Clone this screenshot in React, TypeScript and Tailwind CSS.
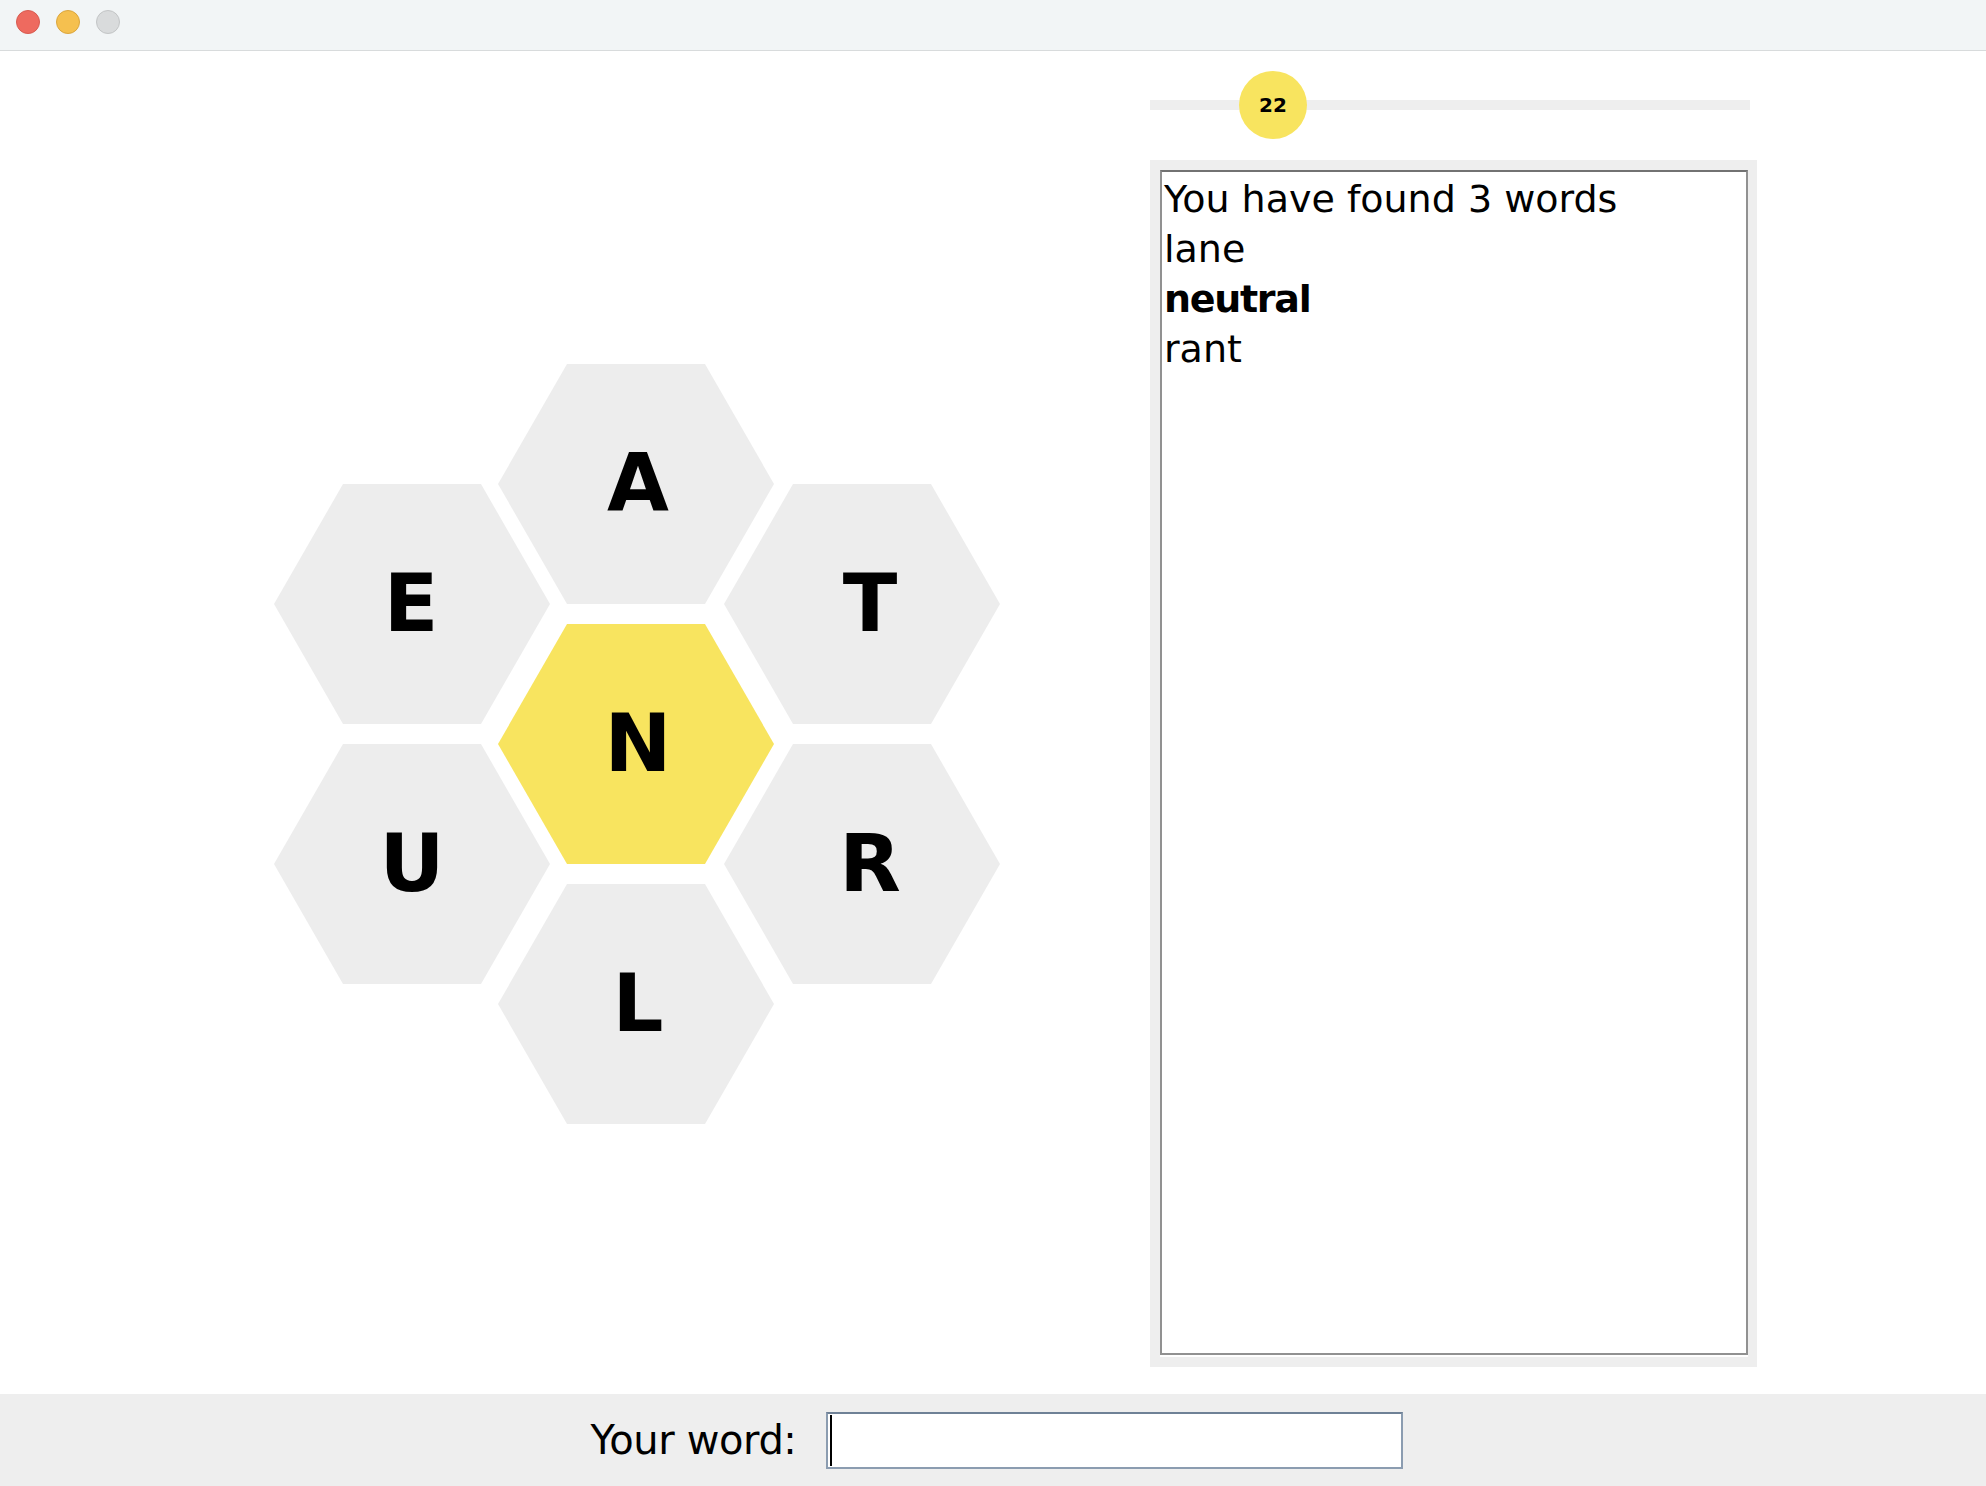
import React from "react";

const hexClip = "[clip-path:polygon(25%_0,75%_0,100%_50%,75%_100%,25%_100%,0_50%)]";

type Hex = { letter: string; left: number; top: number; dx: number; center?: boolean };

const hexes: Hex[] = [
  { letter: "A", left: 224, top: 0, dx: 2 },
  { letter: "E", left: 0, top: 120, dx: -1 },
  { letter: "T", left: 450, top: 120, dx: 8 },
  { letter: "N", left: 224, top: 260, dx: 2, center: true },
  { letter: "U", left: 0, top: 380, dx: 0 },
  { letter: "R", left: 450, top: 380, dx: 8 },
  { letter: "L", left: 224, top: 520, dx: 2 },
];

function HexCell({ h }: { h: Hex }) {
  return (
    <div
      className={`absolute w-[276px] h-[240px] flex items-center justify-center ${hexClip} ${
        h.center ? "bg-[#f8e45f]" : "bg-[#ededed]"
      }`}
      style={{ left: h.left, top: h.top }}
    >
      <span className="text-[80px] font-bold leading-none text-black" style={{ marginLeft: h.dx * 2 }}>
        {h.letter}
      </span>
    </div>
  );
}

export default function App() {
  return (
    <div
      className="w-[1986px] h-[1486px] flex flex-col bg-white overflow-hidden"
      style={{ fontFamily: '"DejaVu Sans", Verdana, sans-serif' }}
    >
      {/* title bar */}
      <div className="h-[51px] shrink-0 bg-[#f2f5f6] border-b border-[#d8dbdc] flex items-center pl-[16px] gap-[16px] pb-[6px]">
        <div className="w-[24px] h-[24px] rounded-full bg-[#ee6a5f] border border-[#d85b50]" />
        <div className="w-[24px] h-[24px] rounded-full bg-[#f5c04f] border border-[#dba63e]" />
        <div className="w-[24px] h-[24px] rounded-full bg-[#d9dbdc] border border-[#c3c5c6]" />
      </div>

      {/* main */}
      <div className="flex-1 flex flex-row">
        {/* board */}
        <div className="w-[1150px] shrink-0 pl-[274px] pt-[313px]">
          <div className="relative w-[726px] h-[760px]">
            {hexes.map((h) => (
              <HexCell key={h.letter} h={h} />
            ))}
          </div>
        </div>

        {/* right column */}
        <div className="w-[607px] shrink-0 flex flex-col pt-[20px]">
          <div className="relative w-[600px] h-[68px]">
            <div className="absolute left-0 right-0 top-[29px] h-[10px] bg-[#eeeeee]" />
            <div className="absolute left-[89px] top-0 w-[68px] h-[68px] rounded-full bg-[#f8e45f] flex items-center justify-center">
              <span className="text-[20px] font-bold text-black leading-none">22</span>
            </div>
          </div>

          <div className="mt-[21px] h-[1207px] bg-[#eeeeee] pl-[10px] pr-[9px] pt-[10px] pb-[12px]">
            <div className="h-full bg-white border-2 border-[#919191] border-t-[#727272] shadow-[0_2px_0_#ffffff] pl-[2px] pt-[2px] text-[38px] leading-[50px] text-black">
              <div>You have found 3 words</div>
              <div>lane</div>
              <div className="font-bold tracking-[-1.3px]">neutral</div>
              <div>rant</div>
            </div>
          </div>
        </div>
      </div>

      {/* bottom bar */}
      <div className="h-[92px] shrink-0 bg-[#eeeeee] flex items-center justify-center gap-[30px] pl-[8px]">
        <span className="text-[40px] tracking-[-0.4px] text-black leading-none">Your word:</span>
        <div className="w-[577px] h-[57px] bg-white border-2 border-[#8b9cb0] border-t-[#6f8196] flex items-center pl-[2px]">
          <div className="w-[2px] h-[51px] bg-black" />
        </div>
      </div>
    </div>
  );
}
